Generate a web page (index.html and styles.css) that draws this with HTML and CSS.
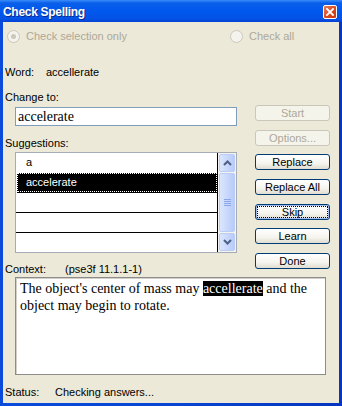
FILE: index.html
```html
<!DOCTYPE html>
<html lang="en">
<head>
    <meta charset="UTF-8">
    <title>Check Spelling</title>
    <link rel="stylesheet" href="styles.css">
</head>
<body>
    <div class="window">
        <div class="titlebar">
            <span class="title">Check Spelling</span>
            <span class="close">
                <svg width="8" height="8" viewBox="0 0 8 8"><path d="M1 1L7 7M7 1L1 7" stroke="#fff" stroke-width="1.8" stroke-linecap="square"/></svg>
            </span>
        </div>

        <div class="dialog">
            <div class="radios">
                <div class="radio checked"><span class="dot"></span>Check selection only</div>
                <div class="radio"><span class="dot"></span>Check all</div>
            </div>

            <div class="word">
                <span class="word-label">Word:</span>
                <span>accellerate</span>
            </div>

            <div class="main">
                <div class="left">
                    <div class="label">Change to:</div>
                    <div class="input">accelerate</div>
                    <div class="label suggestions-label">Suggestions:</div>
                    <div class="list">
                        <div class="items">
                            <div class="item">a</div>
                            <div class="item selected"><span class="focus">accelerate</span></div>
                            <div class="item"></div>
                            <div class="item"></div>
                            <div class="item"></div>
                        </div>
                        <div class="scrollbar">
                            <div class="sb-btn">
                                <svg width="9" height="6" viewBox="0 0 9 6"><path d="M1 5L4.5 1.5L8 5" fill="none" stroke="#4d6185" stroke-width="2"/></svg>
                            </div>
                            <div class="sb-thumb">
                                <span class="grip"></span>
                                <span class="grip"></span>
                                <span class="grip"></span>
                                <span class="grip"></span>
                            </div>
                            <div class="sb-btn">
                                <svg width="9" height="6" viewBox="0 0 9 6"><path d="M1 1L4.5 4.5L8 1" fill="none" stroke="#4d6185" stroke-width="2"/></svg>
                            </div>
                        </div>
                    </div>
                    <div class="context-row">
                        <span class="context-label">Context:</span>
                        <span>(pse3f 11.1.1-1)</span>
                    </div>
                </div>

                <div class="buttons">
                    <button class="btn" disabled>Start</button>
                    <button class="btn" disabled>Options...</button>
                    <button class="btn">Replace</button>
                    <button class="btn">Replace All</button>
                    <button class="btn default"><span class="focus-box">Skip</span></button>
                    <button class="btn">Learn</button>
                    <button class="btn">Done</button>
                </div>
            </div>

            <div class="context">
                The object's center of mass may <span class="hl">accellerate</span> and the object may begin to rotate.
            </div>

            <div class="status">
                <span class="status-label">Status:</span>
                <span>Checking answers...</span>
            </div>
        </div>
    </div>
</body>
</html>
```

FILE: styles.css
```css
body {
    margin: 0;
    font-family: "Liberation Sans", Arial, sans-serif;
    font-size: 11px;
    color: #000;
}
.window {
    width: 342px;
    height: 406px;
    background: linear-gradient(to right, #0a4bdb, #0846d2 50%, #0635c0);
    box-sizing: border-box;
}
.titlebar {
    height: 22px;
    background: linear-gradient(to bottom, #3c8dfa 0, #0a5fe9 3px, #0058ee 50%, #0452e6 85%, #0344d4 100%);
    display: flex;
    align-items: center;
    justify-content: space-between;
    padding: 0 5px 0 3px;
}
.title {
    color: #fff;
    font-weight: bold;
    font-size: 12px;
    letter-spacing: -0.3px;
    text-shadow: 1px 1px 0 #0a2a8a;
    padding-top: 1px;
}
.close {
    width: 14px;
    height: 14px;
    box-sizing: border-box;
    border: 1px solid #fff;
    border-radius: 2px;
    background: linear-gradient(135deg, #e97b5a, #d9461a 60%, #c43a10);
    display: flex;
    align-items: center;
    justify-content: center;
    margin-top: 1px;
}
.dialog {
    margin: 0 3px;
    height: 381px;
    background-color: #ece9d8;
    padding: 7px 0 0 2px;
    box-sizing: border-box;
}
.radios {
    display: grid;
    grid-template-columns: 223px auto;
    height: 14px;
    padding-left: 2px;
    color: #aca899;
}
.radio {
    display: flex;
    align-items: center;
    gap: 6px;
}
.dot {
    width: 13px;
    height: 13px;
    box-sizing: border-box;
    border: 1px solid #cac8bb;
    border-radius: 50%;
    background: #f4f3ee;
    display: flex;
    align-items: center;
    justify-content: center;
}
.radio.checked .dot::after {
    content: "";
    width: 5px;
    height: 5px;
    border-radius: 50%;
    background: #cac8bb;
}
.word {
    margin-top: 22px;
    height: 14px;
    line-height: 14px;
    display: flex;
}
.word-label {
    width: 41px;
}
.main {
    display: flex;
    margin-top: 11px;
}
.left {
    width: 232px;
}
.label {
    height: 14px;
    line-height: 14px;
}
.input {
    margin: 3px 0 0 10px;
    height: 19px;
    box-sizing: border-box;
    border: 1px solid #7f9db9;
    background: #fff;
    font-family: "Liberation Serif", "Times New Roman", serif;
    font-size: 14px;
    line-height: 17px;
    padding-left: 2px;
}
.suggestions-label {
    margin-top: 10px;
}
.list {
    margin: 2px 0 0 10px;
    height: 101px;
    box-sizing: border-box;
    border: 1px solid #a5acb5;
    background: #fff;
    display: flex;
}
.items {
    width: 201px;
    border-right: 1px solid #000;
    overflow: hidden;
}
.item {
    height: 19px;
    border-bottom: 1px solid #000;
    line-height: 19px;
    padding-left: 10px;
}
.item:first-child,
.item.selected {
    border-bottom-color: transparent;
}
.item.selected {
    background: #000;
    color: #fff;
    margin-left: 1px;
    padding-left: 0;
    display: flex;
    align-items: stretch;
}
.focus {
    flex: 1;
    border: 1px dotted #fff;
    padding-left: 8px;
    line-height: 17px;
    margin: 0 0 0 0;
}
.scrollbar {
    width: 18px;
    background: #f4f3ee;
    padding: 1px 1px 1px 1px;
    box-sizing: border-box;
    display: flex;
    flex-direction: column;
    gap: 1px;
}
.sb-btn,
.sb-thumb {
    border: 1px solid #b9cdf8;
    border-radius: 2px;
    background: linear-gradient(to right, #dbe6fe, #c6d5fc 60%, #b8cbf9);
    display: flex;
    align-items: center;
    justify-content: center;
}
.sb-btn {
    height: 16px;
}
.sb-thumb {
    flex: 1;
    flex-direction: column;
    gap: 1px;
}
.grip {
    width: 7px;
    height: 1px;
    background: #8ca7e8;
}
.context-row {
    margin-top: 9px;
    height: 14px;
    line-height: 14px;
    display: flex;
}
.context-label {
    width: 60px;
}
.buttons {
    margin-left: 18px;
    padding-top: 15px;
    display: flex;
    flex-direction: column;
    gap: 8.7px;
}
.btn {
    width: 75px;
    height: 16px;
    padding: 0;
    font-family: "Liberation Sans", Arial, sans-serif;
    font-size: 11px;
    color: #000;
    border: 1px solid #003c74;
    border-radius: 3px;
    background: linear-gradient(to bottom, #fff, #f5f4ee 60%, #e0ddd0);
    display: flex;
    align-items: center;
    justify-content: center;
}
.btn[disabled] {
    border-color: #c9c7ba;
    color: #aca899;
    background: #f5f4ea;
}
.btn.default {
    box-shadow: inset 0 0 0 1px #9fbdf3;
}
.focus-box {
    display: block;
    width: 69px;
    height: 10px;
    line-height: 10px;
    border: 1px dotted #000;
}
.context {
    margin: 1px 0 0 10px;
    width: 311px;
    height: 98px;
    box-sizing: border-box;
    border: 1px solid #8c8c8c;
    box-shadow: inset 1px 1px 0 #d4d0c8;
    background: #fff;
    padding: 2px 4px;
    font-family: "Liberation Serif", "Times New Roman", serif;
    font-size: 14px;
    line-height: 17px;
}
.hl {
    background: #000;
    color: #fff;
}
.status {
    margin-top: 10px;
    height: 14px;
    line-height: 14px;
    display: flex;
}
.status-label {
    width: 50px;
}
```
